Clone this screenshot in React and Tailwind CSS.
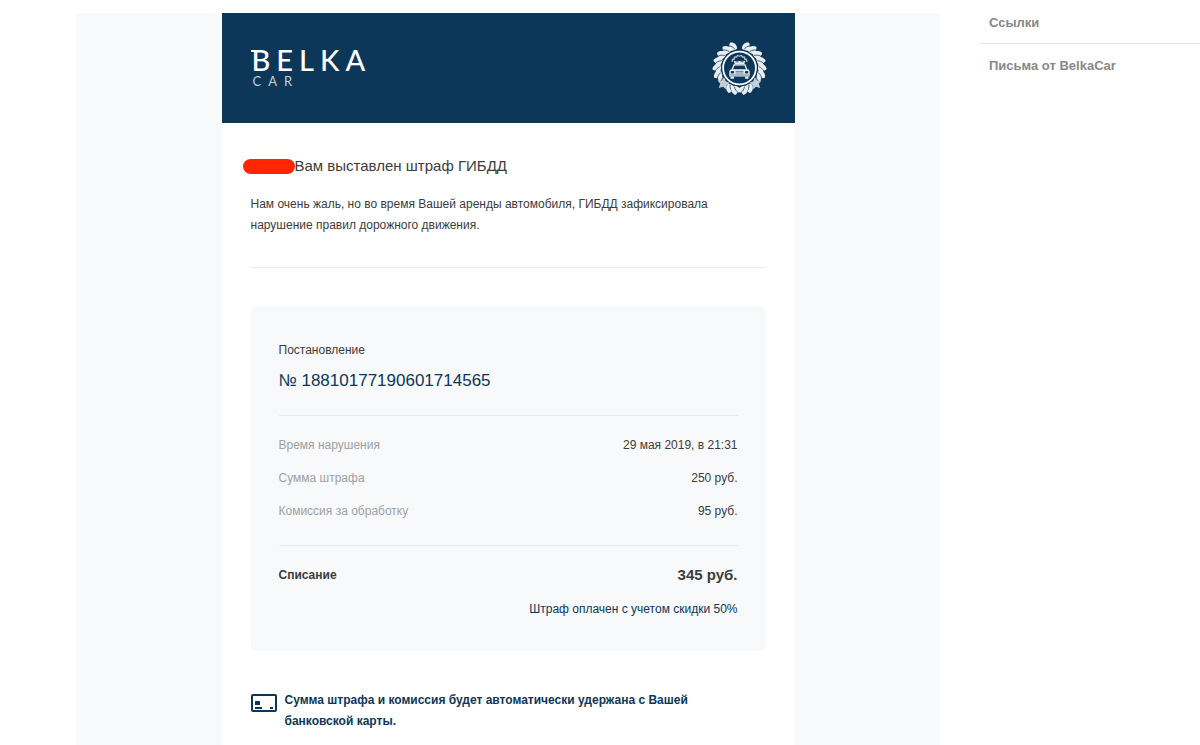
/**
 * Fine notification e-mail from BelkaCar with the article sidebar next to it.
 */

const FINE_ROWS = [
  { label: 'Время нарушения', value: '29 мая 2019, в 21:31' },
  { label: 'Сумма штрафа', value: '250 руб.' },
  { label: 'Комиссия за обработку', value: '95 руб.' },
];

const SIDEBAR_TITLES = ['Ссылки', 'Письма от BelkaCar'];

// angles from the top of the wreath, mirrored for the left half
const LEAF_ANGLES = [19, 37, 55, 73, 91, 109, 156, 170];

function Logo() {
  return (
    <div className="pb-[2px] font-['Lato',sans-serif] text-white">
      <div className="relative pl-px text-[29px] leading-7 font-medium tracking-[6px]">
        <span className="absolute top-[4px] left-0 h-[2px] w-2 bg-white" />
        BELKA
      </div>
      <div className="pl-[2px] text-[13px] leading-[14px] tracking-[7px] text-[#c3ced8]">CAR</div>
    </div>
  );
}

function WreathHalf() {
  return (
    <g>
      <path d="M7.4 -20.2A21.5 21.5 0 0 1 3 21.3" fill="none" stroke="#e9eef2" strokeWidth="5" opacity="0.4" />
      {LEAF_ANGLES.map((angle) => (
        <g key={angle} transform={`rotate(${angle})`}>
          <path d="M-4 -19C-5.4 -23 -3.4 -26.4 0.6 -27.2C3.4 -24.8 2.6 -21 -1 -18.8Z" />
          <path d="M-2.6 -18.6C-1 -22.6 2 -24.4 6 -23.8C5.6 -20.2 2 -18 -2.6 -18.6Z" />
          <path d="M-1.8 -19.2C-0.6 -22 0.6 -23.2 2.4 -24.2" fill="none" stroke="#0c3759" strokeWidth="0.7" />
        </g>
      ))}
      <path
        transform="rotate(134) translate(0 -22.4)"
        d="M0 -6.5L2 -2.4L6.3 -2L3.1 1L4.1 5.3L0 3.1L-4.1 5.3L-3.1 1L-6.3 -2L-2 -2.4Z"
        fill="#c3ced8"
      />
    </g>
  );
}

function Emblem() {
  return (
    <svg className="size-14" viewBox="-28.5 -28 56 56" fill="#e9eef2" aria-hidden="true">
      <WreathHalf />
      <g transform="scale(-1 1)">
        <WreathHalf />
      </g>
      <circle r="17.8" fill="#0c3759" />
      <circle r="16.4" fill="none" stroke="#ffffff" strokeWidth="1.8" />
      {/* gear above the roof */}
      <path d="M-7.5 -6L-7 -8.6L-5.4 -8.6L-5 -10.8L-3 -10.8L-2 -12.6L0 -11.8L2 -12.6L3 -10.8L5 -10.8L5.4 -8.6L7 -8.6L7.5 -6" fill="none" stroke="#c3ced8" strokeWidth="1.2" />
      <path d="M-5.8 -7H5.8L4.8 -4H-4.8Z" />
      <path d="M-4 -6.2H-1M1 -6.2H4" stroke="#0c3759" strokeWidth="0.8" />
      {/* car */}
      <path d="M-7.4 1.8L-5.4 -3.2H5.4L7.4 1.8" fill="none" stroke="#ffffff" strokeWidth="1.3" />
      <path d="M-8.4 1.2H8.4Q10.2 2 10.2 4V8.4H-10.2V4Q-10.2 2 -8.4 1.2Z" />
      <rect x="-8.8" y="3" width="3.4" height="2.4" rx="1" fill="#0c3759" />
      <rect x="5.4" y="3" width="3.4" height="2.4" rx="1" fill="#0c3759" />
      <path d="M-4 3.4H4M-4 5H4M-9.4 7H9.4" stroke="#0c3759" strokeWidth="0.6" />
      <path d="M-9 8.4H-5.6V10.8H-9ZM5.6 8.4H9V10.8H5.6Z" />
    </svg>
  );
}

function CardIcon() {
  return (
    <svg className="mt-1 h-[18px] w-[26px] shrink-0" viewBox="0 0 26 18" fill="#0c3759" aria-hidden="true">
      <rect x="1" y="1" width="24" height="16" rx="1" fill="none" stroke="#0c3759" strokeWidth="2" />
      <rect x="4" y="7" width="5" height="4" rx="0.5" />
      <rect x="4" y="13" width="7" height="2" />
      <rect x="19" y="13" width="3" height="2" />
    </svg>
  );
}

function FineCard() {
  return (
    <section className="mt-[38px] rounded-md bg-[#f7f9fb] px-7 pt-[34px] pb-[31px]">
      <p>Постановление</p>
      <p className="mt-2 text-[17px] leading-6 text-[#0c3759]">№ 18810177190601714565</p>
      <table className="mt-[22px] w-full border-y border-[#e9ebed]">
        <tbody className="before:block before:h-[13px] after:block after:h-[17px]">
          {FINE_ROWS.map((row) => (
            <tr key={row.label}>
              <th scope="row" className="py-1.5 text-left font-normal text-[#a0a0a0]">{row.label}</th>
              <td className="py-1.5 text-right">{row.value}</td>
            </tr>
          ))}
        </tbody>
      </table>
      <div className="mt-[17px] flex items-center justify-between font-bold">
        <span>Списание</span>
        <span className="text-[15px] leading-6">345 руб.</span>
      </div>
      <p className="mt-3 text-right text-[#0c3759]">Штраф оплачен с учетом скидки 50%</p>
    </section>
  );
}

export default function App() {
  return (
    <div className="flex h-screen gap-10 overflow-hidden bg-white pt-[13px] pl-[76px] font-['Liberation_Sans',Arial,sans-serif]">
      <main className="min-h-fit flex-1 bg-[#f7f9fb]">
        <article className="mx-auto min-h-screen max-w-[573px] bg-white text-[12px] leading-[21px] text-[#3c3c3c]">
          <header className="flex h-[110px] items-center justify-between bg-[#0c3759] pr-7 pl-[29px]">
            <Logo />
            <Emblem />
          </header>
          <div className="px-[29px] pt-[31px] pb-8">
            <h1 className="flex items-center text-[15px] leading-6">
              <span className="-ml-2 h-[15px] w-[52px] rounded-full bg-[#ff2600]" />
              Вам выставлен штраф ГИБДД
            </h1>
            <p className="mt-4 border-b border-[#e9ebed] pb-[31px]">
              Нам очень жаль, но во время Вашей аренды автомобиля, ГИБДД зафиксировала{' '}
              <br />
              нарушение правил дорожного движения.
            </p>
            <FineCard />
            <div className="mt-[39px] flex gap-2 font-bold text-[#0c3759]">
              <CardIcon />
              <p className="max-w-[440px]">
                Сумма штрафа и комиссия будет автоматически удержана с Вашей банковской карты.
              </p>
            </div>
          </div>
        </article>
      </main>
      <aside className="w-[220px] text-[13px] leading-5 font-bold text-[#888888]">
        {SIDEBAR_TITLES.map((title) => (
          <h2 key={title} className="border-b border-[#e5e5e5] px-[9px] pb-[10px] not-first:pt-3 last:border-b-0">
            {title}
          </h2>
        ))}
      </aside>
    </div>
  );
}
